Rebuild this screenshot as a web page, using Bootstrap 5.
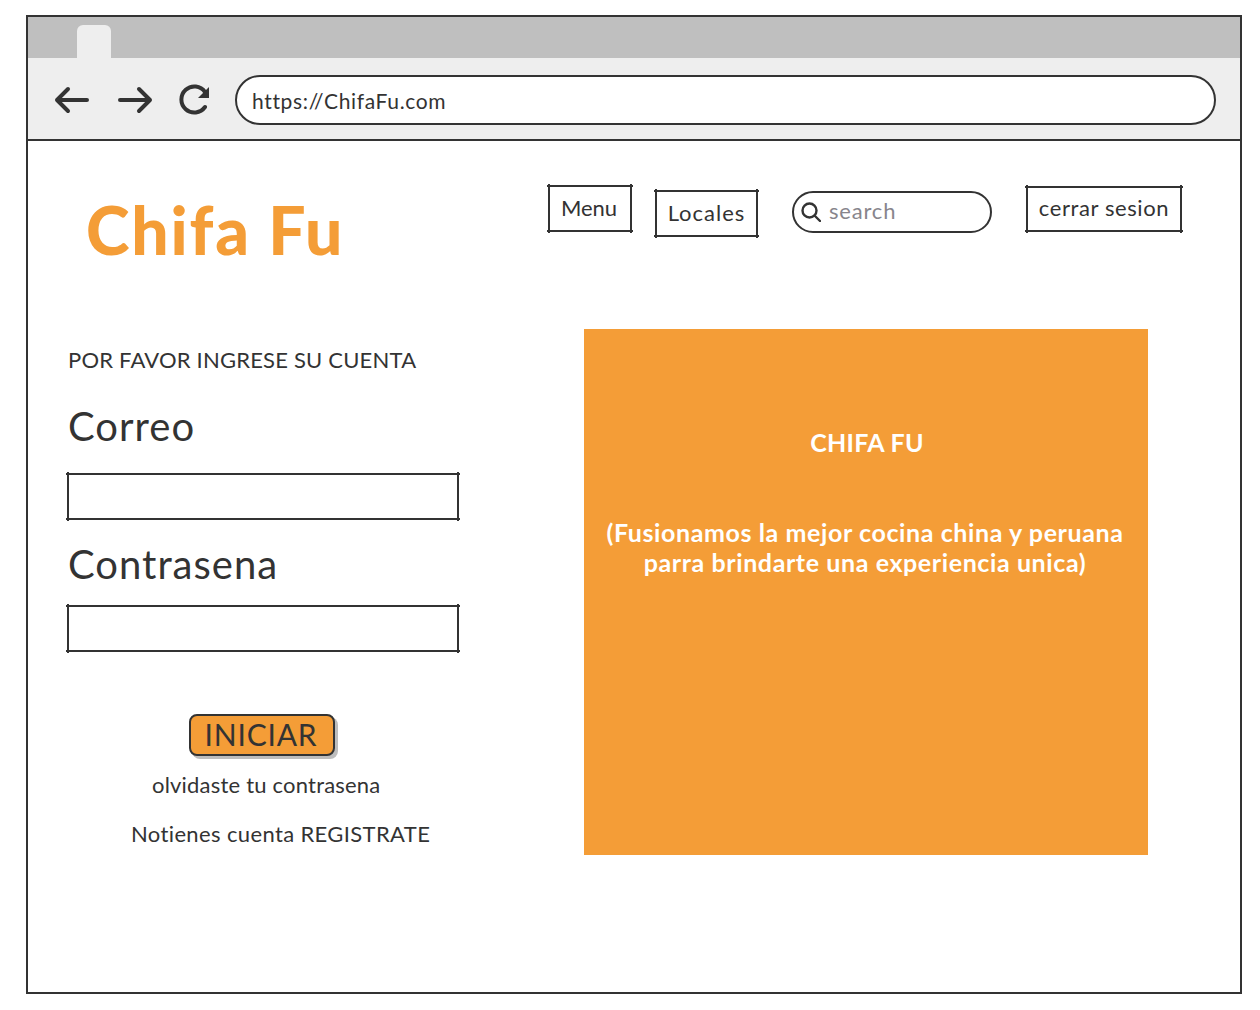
<!DOCTYPE html>
<html lang="es">
<head>
    <meta charset="UTF-8">
    <title>Chifa Fu</title>
    <meta name="viewport" content="width=device-width, initial-scale=1.0">
    <link href="https://cdn.jsdelivr.net/npm/bootstrap@5.3.3/dist/css/bootstrap.min.css" rel="stylesheet">
    <style>
        body {
            background-color: #fff;
            font-family: Lato, "Noto Sans", sans-serif;
            color: #333;
        }

        .browser-frame {
            width: 1216px;
            height: 979px;
            margin: 15px 0 0 26px;
            border: 2px solid #333;
        }

        .tab-strip {
            height: 41px;
            background-color: #bfbfbf;
            padding: 8px 0 0 49px;
        }

        .tab-shape {
            width: 34px;
            height: 33px;
            background-color: #eee;
            border-radius: 6px 6px 0 0;
        }

        .tool-strip {
            height: 83px;
            background-color: #eee;
            border-bottom: 2px solid #333;
            padding: 2px 24px 0 26px;
        }

        .tool-next { margin-left: 25px; }
        .tool-reload { margin-left: 23px; }

        .url-pill {
            height: 50px;
            margin-left: 23px;
            padding: 3px 0 0 15px;
            background-color: #fff;
            border: 2px solid #333;
            border-radius: 25px;
            font-size: 21px;
            letter-spacing: .65px;
        }

        .top-area {
            height: 188px;
            padding-left: 58px;
        }

        .brand-name {
            margin: 52px 0 0;
            color: #f49d37;
            font-size: 66px;
            font-weight: 900;
            line-height: 74px;
            letter-spacing: 1.8px;
        }

        .nav-group { margin-right: 58px; }

        .sketch-box {
            position: relative;
            display: flex;
            align-items: center;
            justify-content: center;
            border: 2px solid #333;
            font-size: 22px;
            background-color: #fff;
        }

        .sketch-box::before,
        .sketch-box::after {
            content: "";
            position: absolute;
            pointer-events: none;
        }

        .sketch-box::before {
            inset: -2px -3px;
            border-top: 2px solid #333;
            border-bottom: 2px solid #333;
        }

        .sketch-box::after {
            inset: -3px -2px;
            border-left: 2px solid #333;
            border-right: 2px solid #333;
        }

        .box-menu { width: 84px; height: 47px; margin-top: 44px; padding: 0 2px 2px 0; }
        .box-locales { width: 103px; height: 47px; margin: 49px 0 0 23px; padding-bottom: 2px; letter-spacing: 1px; }
        .box-cerrar { width: 156px; height: 46px; margin: 45px 0 0 34px; padding-bottom: 4px; letter-spacing: .6px; }

        .search-pill {
            width: 200px;
            height: 42px;
            margin: 50px 0 0 34px;
            padding-left: 7px;
            border: 2px solid #333;
            border-radius: 21px;
            font-size: 22px;
            letter-spacing: .8px;
            color: #87858c;
        }

        .search-word { padding-bottom: 3px; }

        .main-area {
            padding-left: 39px;
        }

        .login-side {
            width: 394px;
        }

        .login-lead {
            margin: 13px 0 0 1px;
            font-size: 22px;
            line-height: 36px;
            letter-spacing: .2px;
        }

        .field-label {
            display: block;
            margin: 23px 0 0 1px;
            font-size: 40px;
            line-height: 50px;
            letter-spacing: 1px;
        }

        .field-label-next {
            margin-top: 19px;
        }

        .field-box {
            width: 392px;
            height: 47px;
            margin-top: 22px;
        }

        .field-box-next {
            margin-top: 16px;
        }

        .btn-iniciar {
            width: 146px;
            height: 42px;
            margin: 62px 0 0 122px;
            padding: 0 2px 9px 0;
            background-color: #f49d37;
            border: 2px solid #333;
            border-radius: 8px;
            box-shadow: 3px 3px 0 #bdbdbd;
            color: #333;
            font-size: 30px;
            line-height: 36px;
            letter-spacing: .8px;
        }

        .forgot-line,
        .signup-line {
            font-size: 22px;
            line-height: 30px;
        }

        .forgot-line { margin: 14px 0 0 85px; letter-spacing: .2px; }
        .signup-line { margin: 19px 0 0 64px; letter-spacing: .37px; }

        .promo-panel {
            width: 564px;
            height: 526px;
            margin-left: 123px;
            padding: 98px 12px 0 10px;
            background-color: #f49d37;
            color: #fff;
            font-size: 25px;
            font-weight: 700;
            line-height: 30px;
            letter-spacing: .6px;
            text-align: center;
        }

        .promo-title { margin: 0 0 60px 4px; letter-spacing: .3px; }
        .promo-text { margin: 0; }
    </style>
</head>
<body>
    <div class="browser-frame">
        <div class="tab-strip">
            <div class="tab-shape"></div>
        </div>
        <div class="tool-strip d-flex align-items-center">
            <svg width="38" height="30" viewBox="0 0 38 30" fill="none" stroke="#333" stroke-width="4" stroke-linecap="round" stroke-linejoin="round">
                <path d="M33 15H3M14 4 3 15l11 11"/>
            </svg>
            <svg class="tool-next" width="38" height="30" viewBox="0 0 38 30" fill="none" stroke="#333" stroke-width="4" stroke-linecap="round" stroke-linejoin="round">
                <path d="M3 15h30M22 4l11 11-11 11"/>
            </svg>
            <svg class="tool-reload" width="34" height="32" viewBox="0 0 34 32" fill="none">
                <path d="M27 8A13 13 0 1 0 27 23" stroke="#333" stroke-width="4" stroke-linecap="round"/>
                <path d="M31 3v11H20z" fill="#333"/>
            </svg>
            <div class="url-pill flex-grow-1 d-flex align-items-center">https://ChifaFu.com</div>
        </div>
        <div class="top-area d-flex">
            <h1 class="brand-name">Chifa Fu</h1>
            <div class="nav-group d-flex align-items-start ms-auto">
                <a class="sketch-box box-menu text-decoration-none text-reset" href="#">Menu</a>
                <a class="sketch-box box-locales text-decoration-none text-reset" href="#">Locales</a>
                <div class="search-pill d-flex align-items-center gap-2">
                    <svg width="20" height="20" viewBox="0 0 20 20" fill="none" stroke="#333" stroke-width="2.4" stroke-linecap="round">
                        <circle cx="8.5" cy="8.5" r="7"/>
                        <path d="m14 14 5 5"/>
                    </svg>
                    <span class="search-word">search</span>
                </div>
                <a class="sketch-box box-cerrar text-decoration-none text-reset" href="#">cerrar sesion</a>
            </div>
        </div>
        <div class="main-area d-flex">
            <form class="login-side">
                <p class="login-lead">POR FAVOR INGRESE SU CUENTA</p>
                <label class="field-label">Correo</label>
                <div class="sketch-box field-box"></div>
                <label class="field-label field-label-next">Contrasena</label>
                <div class="sketch-box field-box field-box-next"></div>
                <button type="button" class="btn btn-iniciar d-block">INICIAR</button>
                <div class="forgot-line">olvidaste tu contrasena</div>
                <div class="signup-line">Notienes cuenta REGISTRATE</div>
            </form>
            <section class="promo-panel">
                <p class="promo-title">CHIFA FU</p>
                <p class="promo-text">(Fusionamos la mejor cocina china y peruana parra brindarte una experiencia unica)</p>
            </section>
        </div>
    </div>
    <script src="https://cdn.jsdelivr.net/npm/bootstrap@5.3.3/dist/js/bootstrap.bundle.min.js"></script>
</body>
</html>
